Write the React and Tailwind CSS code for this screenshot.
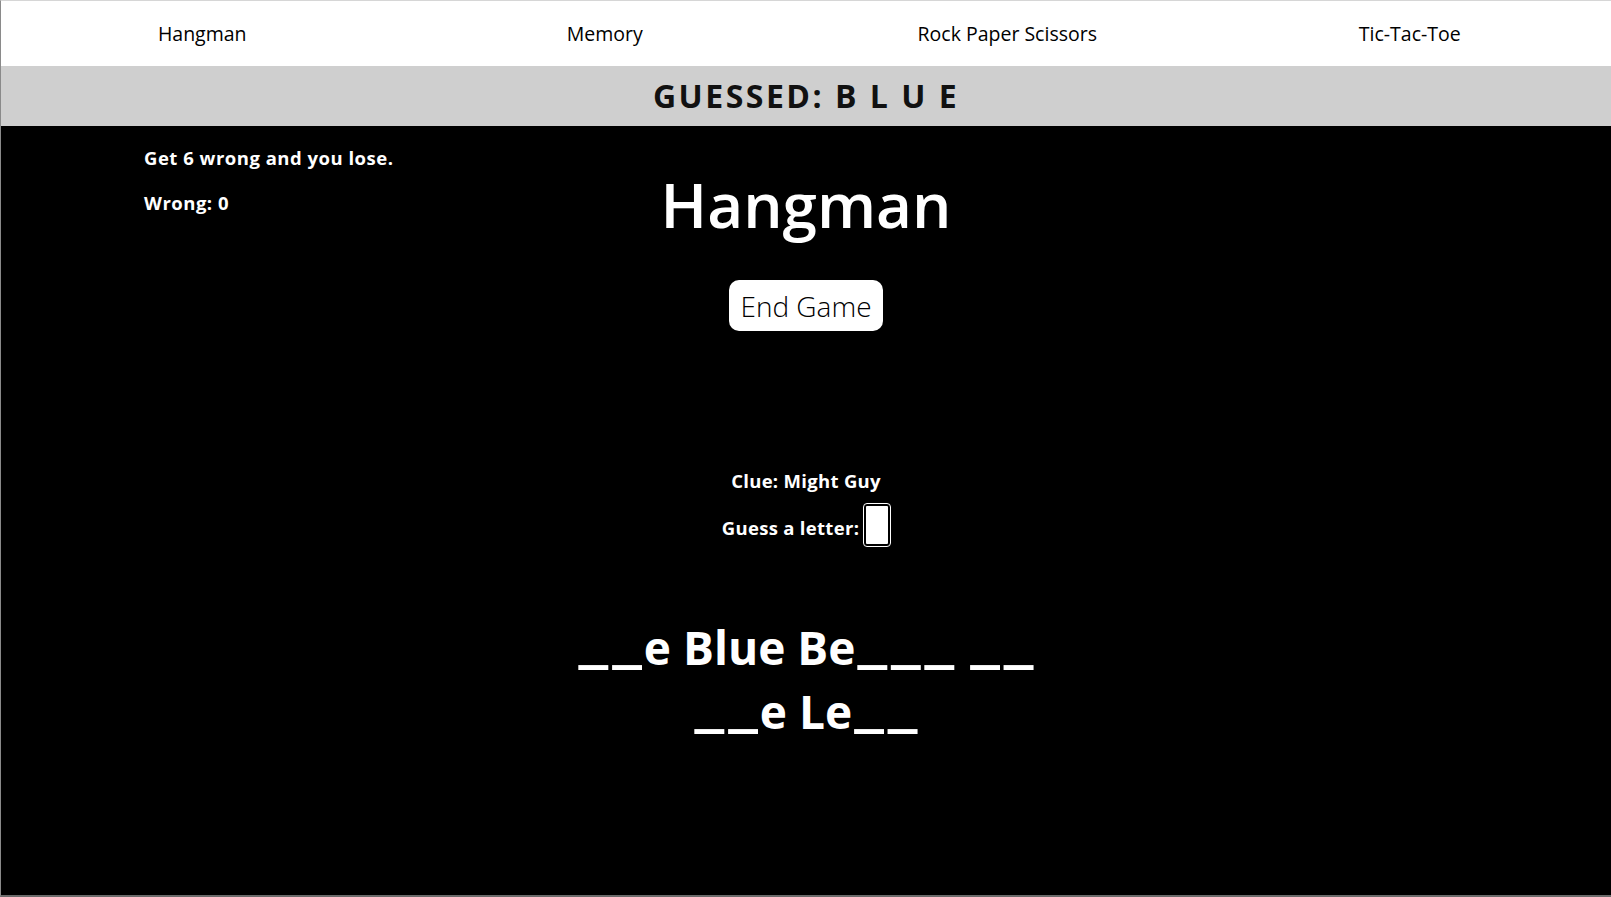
import { useState } from 'react';

const games = ['Hangman', 'Memory', 'Rock Paper Scissors', 'Tic-Tac-Toe'];
const hidden = '__e Blue Be___ __ __e Le__';

const renderWord = (word, wi) => (
  <span key={wi} className="whitespace-nowrap">
    {word.split('').map((ch, i) =>
      ch === '_' ? (
        <span key={i} className="mx-[2px] text-[72px] leading-[0] align-[6px]">
          _
        </span>
      ) : (
        <span key={i}>{ch}</span>
      )
    )}
  </span>
);

const App = () => {
  const [letter, setLetter] = useState('');
  const words = hidden.split(' ');

  return (
    <div className="h-[897px] flex flex-col bg-black border-l border-t border-l-[#8a8a8a] border-t-[#d6d6d6] border-b-2 border-b-[#6b6b6b] overflow-hidden font-['Open_Sans',sans-serif]">
      {/* Nav */}
      <nav className="grid grid-cols-4 h-[65px] shrink-0 items-center bg-white text-center text-[19.5px] font-medium text-black">
        {games.map((g) => (
          <a key={g} href="#" className="block">
            {g}
          </a>
        ))}
      </nav>

      {/* Guessed letters */}
      <div className="h-[60px] shrink-0 flex items-center justify-center bg-[#cfcfcf] text-[32px] font-bold tracking-[2.5px] text-[#111]">
        GUESSED: B L U E
      </div>

      <main className="flex-1 text-white">
        <div className="grid grid-cols-[1fr_auto_1fr]">
          <div className="pl-[143px] pt-[18px] text-[18.5px] font-bold leading-[27px] tracking-[0.5px]">
            <p>Get 6 wrong and you lose.</p>
            <p className="mt-[18px]">Wrong: 0</p>
          </div>
          <div className="flex flex-col items-center">
            <h1 className="mt-[41px] text-[62px] font-semibold leading-[74px]">Hangman</h1>
            <button className="mt-[39px] h-[51px] w-[154px] rounded-[10px] bg-white text-[28px] font-light text-black">
              End Game
            </button>
          </div>
          <div />
        </div>

        <div className="mt-[136px] flex flex-col items-center text-[18.5px] font-bold leading-[27px] tracking-[0.3px]">
          <p>Clue: Might Guy</p>
          <div className="mt-[10px] flex items-center gap-[5px]">
            <span className="mt-[4px]">Guess a letter:</span>
            <input
              type="text"
              maxLength={1}
              value={letter}
              onChange={(e) => setLetter(e.target.value)}
              className="h-[42px] w-[26px] rounded-[3px] border-2 border-black bg-white text-black outline outline-1 outline-white"
            />
          </div>
        </div>

        <div className="mx-auto mt-[69px] max-w-[500px] text-center text-[46px] font-bold leading-[64px]">
          {words.map((w, i) => (
            <span key={i}>
              {renderWord(w, i)}
              {i < words.length - 1 ? ' ' : ''}
            </span>
          ))}
        </div>
      </main>
    </div>
  );
};

export default App;
